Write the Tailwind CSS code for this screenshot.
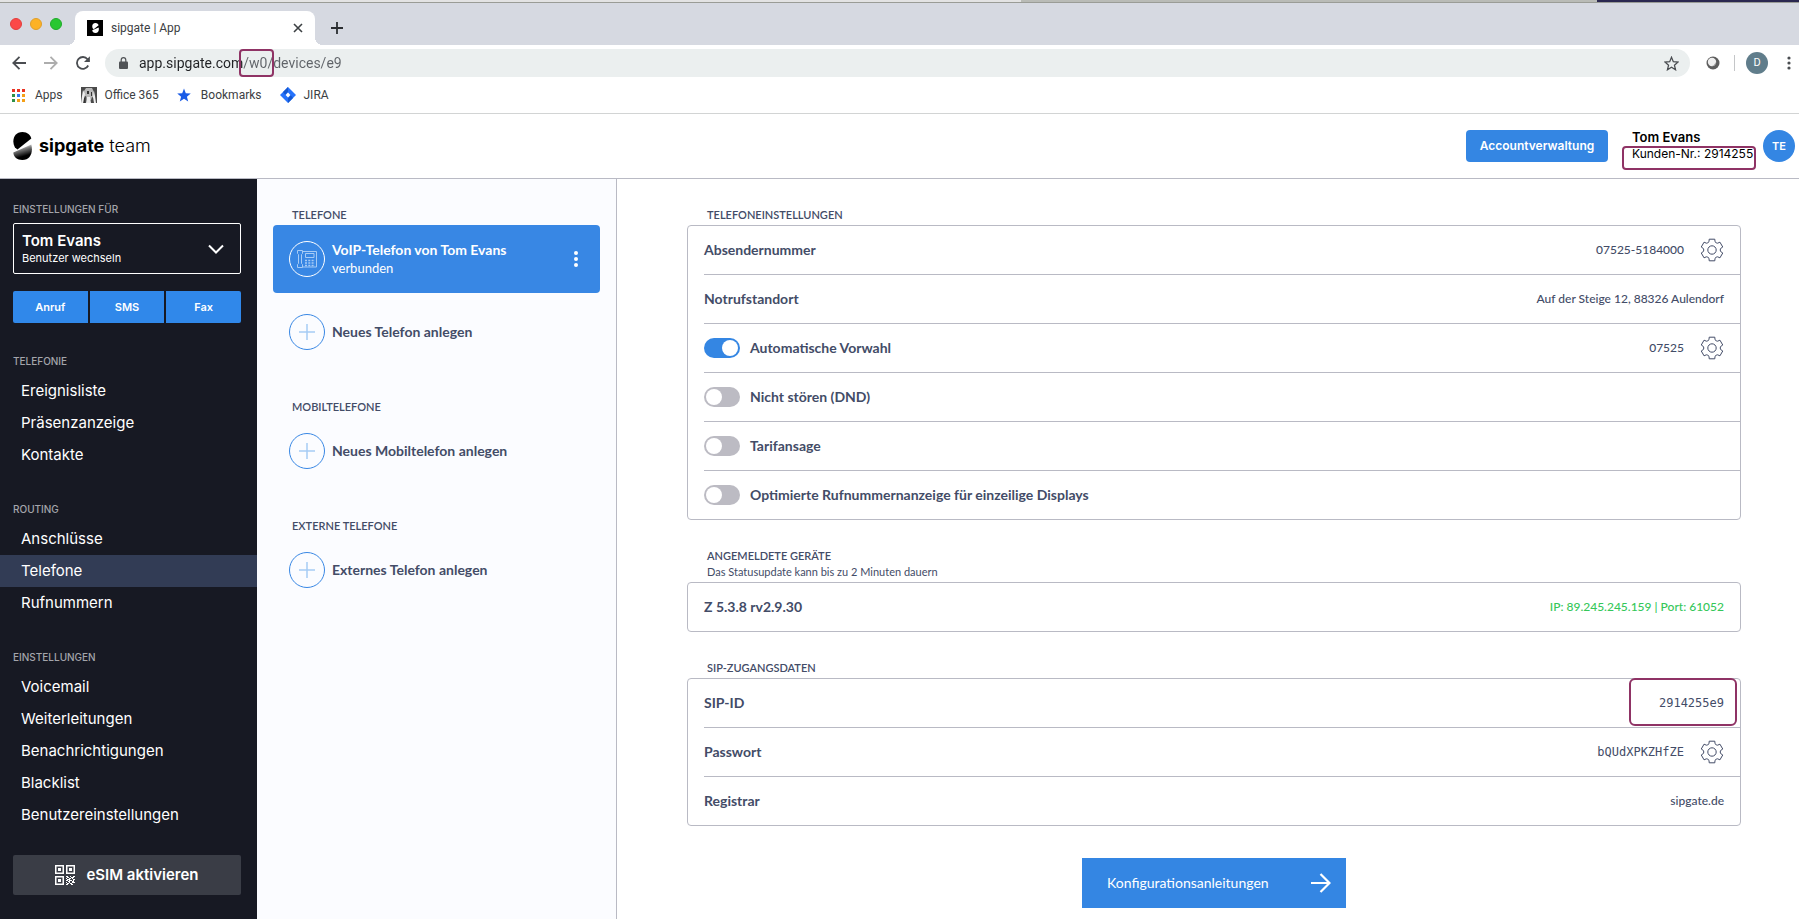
<!DOCTYPE html>
<html lang="de">
<head>
  <meta charset="UTF-8" />
  <meta name="viewport" content="width=device-width, initial-scale=1.0" />
  <title>sipgate | App</title>
  <script src="https://cdn.jsdelivr.net/npm/@tailwindcss/browser@4"></script>
</head>
<body class="min-h-screen flex flex-col bg-white font-['Lato','Noto_Sans',sans-serif] text-[#434c67]">
  <!-- shared icons -->
  <svg class="absolute size-0">
    <defs>
      <linearGradient id="shade" x1="0" y1="0" x2="0.35" y2="1">
        <stop offset="0.15" stop-color="#fff" />
        <stop offset="0.45" stop-color="#777" />
        <stop offset="0.85" stop-color="#000" />
      </linearGradient>
    </defs>
    <symbol id="gear" viewBox="-12 -12 24 24">
      <path d="M-2.800-10.800H2.800L3-8.300Q4-6.900 5.600-6.800L7.950-7.820L10.750-2.980L8.600-1.500Q7.800 0 8.600 1.500L10.750 2.980L7.950 7.820L5.600 6.800Q4 6.900 3 8.300L2.800 10.800H-2.800L-3 8.300Q-4 6.900-5.600 6.800L-7.950 7.820L-10.750 2.980L-8.600 1.500Q-7.800 0-8.600-1.500L-10.750-2.980L-7.950-7.820L-5.600-6.800Q-4-6.900-3-8.300Z" fill="none" stroke="currentColor" stroke-linejoin="round" />
      <circle r="4.200" fill="none" stroke="currentColor" />
    </symbol>
    <symbol id="plus" viewBox="0 0 36 36">
      <circle cx="18" cy="18" r="17.500" fill="none" stroke="#3887e4" />
      <path d="M10 18h16M18 10v16" stroke="#a6cbf5" stroke-width="1.500" />
    </symbol>
    <symbol id="logo" viewBox="0 0 19 28">
      <path d="M2 15.500C-1.500 9 .5 0 9.500 0c5 0 8 3 8.800 6.500L4.500 17.500z" fill="currentColor" />
      <path d="M18.300 12.500c2 8-1 15.500-9 15.500C4 28 .5 25 .3 20.500z" fill="url(#shade)" />
    </symbol>
  </svg>

  <!-- browser window -->
  <div class="font-['Roboto',sans-serif] text-[#3c4043]">
    <div class="flex h-[2px]">
      <div class="w-[1021px] bg-[#e3e3e3]"></div>
      <div class="flex-1 bg-[#b9bbb6]"></div>
      <div class="w-[202px] bg-[#2b2850]"></div>
    </div>
    <div class="flex h-[43px] items-end border-t border-[#9a9c96] bg-[#d6d9e1]">
      <div class="flex w-[75px] gap-2 self-center pl-[10px]">
        <span class="size-3 rounded-full border border-[#e33e3c] bg-[#fc4948]"></span>
        <span class="size-3 rounded-full border border-[#e09f2a] bg-[#fdb225]"></span>
        <span class="size-3 rounded-full border border-[#1eab2a] bg-[#28c731]"></span>
      </div>
      <div class="relative flex h-[34px] w-[240px] items-center rounded-t-lg bg-white px-3">
        <span class="absolute bottom-0 -left-2 size-2 bg-[radial-gradient(circle_at_0_0,#d6d9e1_8px,#fff_8px)]"></span>
        <span class="absolute bottom-0 -right-2 size-2 bg-[radial-gradient(circle_at_100%_0,#d6d9e1_8px,#fff_8px)]"></span>
        <span class="flex size-4 items-center justify-center bg-black text-white">
          <svg viewBox="0 0 19 28" class="h-[10px] w-[7px]"><path d="M2 15.500C-1.500 9 .5 0 9.500 0c5 0 8 3 8.800 6.500L4.500 17.500zM18.300 12.500c2 8-1 15.500-9 15.500C4 28 .5 25 .3 20.500z" fill="#fff" /></svg>
        </span>
        <span class="ml-2 flex-1 text-xs">sipgate | App</span>
        <button aria-label="Tab schließen" class="size-[10px]"><svg viewBox="0 0 10 10" stroke="#3c4043" stroke-width="1.600"><path d="M1 1l8 8M9 1L1 9" /></svg></button>
      </div>
      <button aria-label="Neuer Tab" class="ml-4 mb-[11px] size-3"><svg viewBox="0 0 12 12" stroke="#2b2e31" stroke-width="1.800"><path d="M6 0v12M0 6h12" /></svg></button>
    </div>

    <div class="flex h-9 items-center pl-3 pr-2">
      <button aria-label="Zurück" class="size-[14px]"><svg viewBox="0 0 14 14" fill="none" stroke="#4a4d51" stroke-width="1.800"><path d="M14 7H1.500M7.500 .8L1.300 7l6.200 6.200" /></svg></button>
      <button aria-label="Vorwärts" class="ml-[18px] size-[14px]"><svg viewBox="0 0 14 14" fill="none" stroke="#adadad" stroke-width="1.800"><path d="M0 7h12.500M6.500 .8L12.700 7l-6.200 6.200" /></svg></button>
      <button aria-label="Neu laden" class="ml-[18px] size-[14px]"><svg viewBox="0 0 14 14" fill="none" stroke="#4a4d51" stroke-width="1.800"><path d="M12.200 9.500A5.900 5.900 0 1 1 11.500 3.200L12.500 4.500" /><path d="M13.900 .2v5.900H8z" fill="#4a4d51" stroke="none" /></svg></button>
      <div class="relative ml-[15px] flex h-7 flex-1 items-center rounded-full bg-[#ebefef] pl-[14px] pr-[11px]">
        <svg viewBox="0 0 9 12" class="h-3 w-[9px]"><rect y="4.500" width="9" height="7.500" rx="1" fill="#505356" /><path d="M2.200 5V3a2.300 2.300 0 0 1 4.600 0v2" fill="none" stroke="#505356" stroke-width="1.200" /></svg>
        <input type="text" aria-label="Adresse" value="app.sipgate.com/w0/devices/e9" class="ml-[11px] flex-1 bg-[linear-gradient(90deg,#202124_104px,#5f6368_104px)] bg-clip-text text-sm text-transparent outline-none" />
        <span class="absolute left-[134px] top-0 h-7 w-[35px] rounded border-2 border-[#8f3365]"></span>
        <svg viewBox="0 0 24 24" class="size-[15px]" fill="none" stroke="#4a4d51" stroke-width="2"><path d="M12 2l2.900 7.100 7.600.6-5.800 5 1.800 7.400-6.500-4-6.500 4 1.800-7.400-5.800-5 7.600-.6z" /></svg>
      </div>
      <svg viewBox="0 0 14 14" class="ml-4 size-[14px]"><circle cx="7" cy="7" r="6.500" fill="#5d5d5d" /><circle cx="6" cy="6" r="4.200" fill="#eee" /><path d="M6 10a4 4 0 0 0 4-4l-2 3z" fill="#999" /></svg>
      <span class="ml-[14px] h-4 w-px bg-[#c4c6c8]"></span>
      <button aria-label="Profil" class="ml-[11px] size-[22px] rounded-full bg-[#607d8b] text-[11px] text-white">D</button>
      <button aria-label="Menü" class="ml-[19px] h-[14px] w-1"><svg viewBox="0 0 4 14" fill="#4a4d51"><circle cx="2" cy="2" r="1.600" /><circle cx="2" cy="7" r="1.600" /><circle cx="2" cy="12" r="1.600" /></svg></button>
    </div>

    <nav class="flex h-[33px] items-center gap-[18px] border-b border-[#d2d4d4] pb-1 pl-3 text-xs">
      <a href="#" class="flex items-center gap-[10px]">
        <svg viewBox="0 0 13 13" class="size-[13px]">
          <path d="M0 0h3v3H0zM5 0h3v3H5zM10 0h3v3h-3z" fill="#ea3323" />
          <path d="M0 5h3v3H0zM0 10h3v3H0z" fill="#2e9147" />
          <path d="M5 5h3v3H5z" fill="#3079f0" />
          <path d="M10 5h3v3h-3zM5 10h3v3H5zM10 10h3v3h-3z" fill="#f4a018" />
        </svg>
        Apps
      </a>
      <a href="#" class="flex items-center gap-2">
        <svg viewBox="0 0 16 16" class="size-4">
          <path d="M0 0h16v16H0z" fill="#4a4a4a" />
          <path d="M5 1l6 0 2 4v6l-2-1-1 3H6l-1-4-3 1 1-6z" fill="#b9b9b9" />
          <path d="M2 3l2 4-2 9H0l1-7zM13 4l1 5 1 7h-2l-1-6zM6 10l3 0 1 6H5z" fill="#eee" />
          <path d="M6 4h2v3H6zM10 5h1v4h-1zM3 11h1v5H3z" fill="#333" />
        </svg>
        Office 365
      </a>
      <a href="#" class="flex items-center gap-[10px]">
        <svg viewBox="0 0 24 24" class="size-[14px]" fill="#1a5be6"><path d="M12 1l3.100 7.900 8.500.5-6.600 5.400 2.200 8.200-7.200-4.600L4.800 23 7 14.800.4 9.400l8.500-.5z" /></svg>
        Bookmarks
      </a>
      <a href="#" class="flex items-center gap-2">
        <svg viewBox="0 0 16 16" class="size-4"><path d="M8 0l8 8-8 8-8-8z" fill="#2672fb" /><path d="M8 0v5L5.200 7.800 3 5zM8 16v-5l2.800-2.800L13 11z" fill="#1457d0" /><path d="M8 5.600L10.400 8 8 10.400 5.600 8z" fill="#fff" /></svg>
        JIRA
      </a>
    </nav>
  </div>

  <!-- app header -->
  <header class="flex h-[65px] items-center border-b border-[#b9bac4] pl-[13px] pr-1 font-['Inter',sans-serif] text-black">
    <svg class="h-7 w-[19px]"><use href="#logo" /></svg>
    <span class="ml-[7px] flex-1 text-lg"><b>sipgate</b> <span class="font-light">team</span></span>
    <button class="h-8 w-[142px] rounded bg-[#3486e3] text-xs font-semibold text-white">Accountverwaltung</button>
    <div class="relative ml-6 w-[119px]">
      <div class="text-[13px] leading-4 font-semibold">Tom Evans</div>
      <div class="text-xs leading-[18px] whitespace-nowrap">Kunden-Nr.: 2914255</div>
      <span class="absolute -left-[10px] top-[17px] h-6 w-[134px] rounded border-2 border-[#8f3365]"></span>
    </div>
    <button aria-label="Profil Tom Evans" class="ml-3 size-8 rounded-full bg-[#3486e3] text-[11px] font-semibold text-white">TE</button>
  </header>

  <div class="flex flex-1">
    <aside class="w-[257px] shrink-0 bg-[#171923] pt-6 font-['Inter',sans-serif] text-white">
      <div class="pl-[13px] pr-4">
        <h2 class="text-[10px] leading-3 font-medium text-[#a4a5ab]">EINSTELLUNGEN FÜR</h2>
        <button class="mt-2 flex h-[51px] w-full items-center justify-between rounded-xs border border-white pl-2 pr-4 text-left">
          <span>
            <span class="block text-[15px] leading-[18px] font-semibold">Tom Evans</span>
            <span class="block text-[11px] leading-4">Benutzer wechseln</span>
          </span>
          <svg viewBox="0 0 16 10" class="h-[10px] w-4" fill="none" stroke="#fff" stroke-width="2"><path d="M1 1.500l7 7 7-7" /></svg>
        </button>
        <div class="mt-[17px] grid grid-cols-3 gap-[2px] overflow-hidden rounded-xs text-[11px] font-semibold">
          <button class="h-8 bg-[#3088ea]">Anruf</button>
          <button class="h-8 bg-[#3088ea]">SMS</button>
          <button class="h-8 bg-[#3088ea]">Fax</button>
        </div>
      </div>

      <nav class="text-[15px] leading-8">
        <h2 class="mt-8 mb-2 pl-[13px] text-[10px] leading-3 font-medium text-[#a4a5ab]">TELEFONIE</h2>
        <a href="#" class="block pl-[21px]">Ereignisliste</a>
        <a href="#" class="block pl-[21px]">Präsenzanzeige</a>
        <a href="#" class="block pl-[21px]">Kontakte</a>
        <h2 class="mt-8 mb-2 pl-[13px] text-[10px] leading-3 font-medium text-[#a4a5ab]">ROUTING</h2>
        <a href="#" class="block pl-[21px]">Anschlüsse</a>
        <a href="#" class="block bg-[#323c55] pl-[21px]">Telefone</a>
        <a href="#" class="block pl-[21px]">Rufnummern</a>
        <h2 class="mt-8 mb-2 pl-[13px] text-[10px] leading-3 font-medium text-[#a4a5ab]">EINSTELLUNGEN</h2>
        <a href="#" class="block pl-[21px]">Voicemail</a>
        <a href="#" class="block pl-[21px]">Weiterleitungen</a>
        <a href="#" class="block pl-[21px]">Benachrichtigungen</a>
        <a href="#" class="block pl-[21px]">Blacklist</a>
        <a href="#" class="block pl-[21px]">Benutzereinstellungen</a>
      </nav>

      <div class="mt-6 pl-[13px] pr-4">
        <button class="flex h-10 w-full items-center justify-center gap-[11px] rounded-xs bg-[#3a3d46] text-[15px] font-semibold">
          <svg viewBox="0 0 20 20" class="size-5" fill="none" stroke="#fff">
            <path d="M.75 .75h7.500v7.500h-7.500zM11.750 .75h7.500v7.500h-7.500zM.75 11.750h7.500v7.500h-7.500z" stroke-width="1.500" />
            <path d="M3 3h3v3H3zM14 3h3v3h-3zM3 14h3v3H3z" fill="#fff" stroke="none" />
            <path d="M11 11.500h2m2 0h1m2 0h2M12 12.500h2m2 0h3M11 13.500h1m2 0h2m1 0h1M12 14.500h3m3 0h2M11 15.500h2m1 0h3m1 0h1M13 16.500h2m2 0h2M11 17.500h1m2 0h1m2 0h3M12 18.500h2m1 0h2M11 19.500h2m3 0h2" />
          </svg>
          eSIM aktivieren
        </button>
      </div>
    </aside>

    <section class="w-[360px] shrink-0 border-r border-[#b9bac4] bg-[#fbfcff] px-4 pt-7 text-sm font-bold">
      <h2 class="mb-0.5 pl-[19px] text-[11px] leading-4 font-semibold">TELEFONE</h2>
      <div class="flex h-[68px] items-center rounded bg-[#3887e4] pl-4 pr-[22px] text-white">
        <svg viewBox="0 0 36 36" class="size-9" fill="none" stroke="#fff">
          <circle cx="18" cy="18" r="17.500" />
          <g stroke="#a6cbf5">
            <path d="M8.500 9.500h5v3l-1 1v9l1 1v3h-5v-3l1-1v-9l-1-1zM13.500 10.500h14v15.500h-14M16.500 12.500h8.500v4h-8.500z" />
            <path d="M16 19.500h10M16 22h10M16 24.500h10" stroke-width="1.600" stroke-dasharray="2 1.300" />
          </g>
        </svg>
        <div class="ml-[7px] flex-1">
          <div class="leading-[18px]">VoIP-Telefon von Tom Evans</div>
          <div class="text-[13px] leading-[18px] font-normal">verbunden</div>
        </div>
        <button aria-label="Optionen" class="h-4 w-1"><svg viewBox="0 0 4 16" fill="#fff"><circle cx="2" cy="2" r="2" /><circle cx="2" cy="8" r="2" /><circle cx="2" cy="14" r="2" /></svg></button>
      </div>
      <button class="mt-[5px] flex h-[68px] w-full items-center gap-[7px] pl-4"><svg class="size-9"><use href="#plus" /></svg>Neues Telefon anlegen</button>

      <h2 class="mt-[33px] mb-0.5 pl-[19px] text-[11px] leading-4 font-semibold">MOBILTELEFONE</h2>
      <button class="flex h-[68px] w-full items-center gap-[7px] pl-4"><svg class="size-9"><use href="#plus" /></svg>Neues Mobiltelefon anlegen</button>

      <h2 class="mt-[33px] mb-0.5 pl-[19px] text-[11px] leading-4 font-semibold">EXTERNE TELEFONE</h2>
      <button class="flex h-[68px] w-full items-center gap-[7px] pl-4"><svg class="size-9"><use href="#plus" /></svg>Externes Telefon anlegen</button>
    </section>

    <main class="flex-1 pl-[70px] pr-[58px] pt-7 pb-[11px] text-xs font-medium">
      <h2 class="mb-0.5 pl-5 text-[11px] leading-4 font-semibold">TELEFONEINSTELLUNGEN</h2>
      <div class="divide-y divide-[#b9bac4] rounded border border-[#b9bac4] pl-4">
        <div class="flex h-12 box-content items-center pr-4">
          <span class="flex-1 text-sm font-bold">Absendernummer</span>
          <span>07525-5184000</span>
          <button aria-label="Absendernummer ändern" class="ml-4 size-6"><svg class="size-6"><use href="#gear" /></svg></button>
        </div>
        <div class="flex h-12 box-content items-center pr-4">
          <span class="flex-1 text-sm font-bold">Notrufstandort</span>
          <span>Auf der Steige 12, 88326 Aulendorf</span>
        </div>
        <div class="flex h-12 box-content items-center pr-4">
          <input id="vorwahl" type="checkbox" checked class="h-5 w-9 appearance-none rounded-full bg-[#bcbbc3] p-[2px] before:block before:size-4 before:rounded-full before:bg-white checked:bg-[#3486e3] checked:before:ml-4" />
          <label for="vorwahl" class="ml-[10px] flex-1 text-sm font-bold">Automatische Vorwahl</label>
          <span>07525</span>
          <button aria-label="Vorwahl ändern" class="ml-4 size-6"><svg class="size-6"><use href="#gear" /></svg></button>
        </div>
        <div class="flex h-12 box-content items-center pr-4">
          <input id="dnd" type="checkbox" class="h-5 w-9 appearance-none rounded-full bg-[#bcbbc3] p-[2px] before:block before:size-4 before:rounded-full before:bg-white checked:bg-[#3486e3] checked:before:ml-4" />
          <label for="dnd" class="ml-[10px] flex-1 text-sm font-bold">Nicht stören (DND)</label>
        </div>
        <div class="flex h-12 box-content items-center pr-4">
          <input id="tarif" type="checkbox" class="h-5 w-9 appearance-none rounded-full bg-[#bcbbc3] p-[2px] before:block before:size-4 before:rounded-full before:bg-white checked:bg-[#3486e3] checked:before:ml-4" />
          <label for="tarif" class="ml-[10px] flex-1 text-sm font-bold">Tarifansage</label>
        </div>
        <div class="flex h-12 box-content items-center pr-4">
          <input id="display" type="checkbox" class="h-5 w-9 appearance-none rounded-full bg-[#bcbbc3] p-[2px] before:block before:size-4 before:rounded-full before:bg-white checked:bg-[#3486e3] checked:before:ml-4" />
          <label for="display" class="ml-[10px] flex-1 text-sm font-bold">Optimierte Rufnummernanzeige für einzeilige Displays</label>
        </div>
      </div>

      <h2 class="mt-7 pl-5 text-[11px] leading-4 font-semibold">ANGEMELDETE GERÄTE</h2>
      <p class="mb-0.5 pl-5 text-[11px] leading-4 font-normal">Das Statusupdate kann bis zu 2 Minuten dauern</p>
      <div class="rounded border border-[#b9bac4] pl-4">
        <div class="flex h-12 items-center pr-4">
          <span class="flex-1 text-sm font-bold">Z 5.3.8 rv2.9.30</span>
          <span class="text-[#35c759]">IP: 89.245.245.159 | Port: 61052</span>
        </div>
      </div>

      <h2 class="mt-7 mb-0.5 pl-5 text-[11px] leading-4 font-semibold">SIP-ZUGANGSDATEN</h2>
      <div class="divide-y divide-[#b9bac4] rounded border border-[#b9bac4] pl-4">
        <div class="relative flex h-12 box-content items-center pr-4">
          <span class="flex-1 text-sm font-bold">SIP-ID</span>
          <span class="font-['DejaVu_Sans_Mono',monospace]">2914255e9</span>
          <span class="absolute -top-px right-[3px] h-12 w-[108px] rounded-md border-2 border-[#8f3365]"></span>
        </div>
        <div class="flex h-12 box-content items-center pr-4">
          <span class="flex-1 text-sm font-bold">Passwort</span>
          <span class="font-['DejaVu_Sans_Mono',monospace]">bQUdXPKZHfZE</span>
          <button aria-label="Passwort ändern" class="ml-4 size-6"><svg class="size-6"><use href="#gear" /></svg></button>
        </div>
        <div class="flex h-12 box-content items-center pr-4">
          <span class="flex-1 text-sm font-bold">Registrar</span>
          <span>sipgate.de</span>
        </div>
      </div>

      <a href="#" class="mx-auto mt-8 flex h-[50px] w-[264px] items-center justify-between bg-[#3486e3] pl-[25px] pr-[15px] text-sm font-normal text-white">
        Konfigurationsanleitungen
        <svg viewBox="0 0 20 20" class="size-5" fill="none" stroke="#fff" stroke-width="2.200"><path d="M0 10h18.500M9.500 1l9 9-9 9" /></svg>
      </a>
    </main>
  </div>
</body>
</html>
